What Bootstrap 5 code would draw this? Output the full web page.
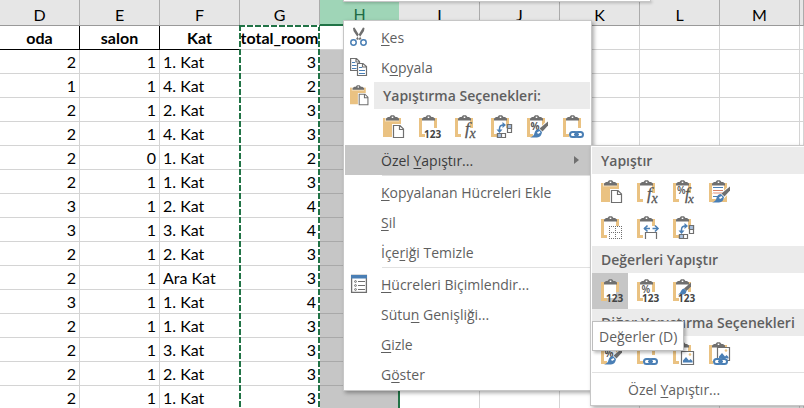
<!DOCTYPE html>
<html lang="tr">
<head>
<meta charset="utf-8">
<meta name="viewport" content="width=device-width, initial-scale=1">
<title>Özel Yapıştır</title>
<link href="https://cdn.jsdelivr.net/npm/bootstrap@5.3.0/dist/css/bootstrap.min.css" rel="stylesheet">
<style>
  body { font-family: "Open Sans", "Noto Sans", sans-serif; background: #fff; color: #000; }
  .workbook { min-height: 100vh; height: 100vh; }

  /* sheet */
  .sheet { table-layout: fixed; border-collapse: separate; border-spacing: 0; font-family: Lato, sans-serif; font-size: 16px; line-height: 23px; }
  .sheet col { width: 80px; }
  .sheet col.rest { width: auto; }
  .sheet th, .sheet td { padding: 0 3px; height: 24px; border: 0 solid #d4d4d4; border-width: 0 1px 1px 0; white-space: nowrap; overflow: hidden; }
  .sheet .letters th { height: 26px; padding: 4px 0 0; line-height: 21px; font-weight: 400; text-align: center; background: #e6e6e6; border-color: #ababab; border-bottom-color: #999; }
  .sheet .letters .picked { background: #9fd5b7; color: #1e6b45; border-right-color: #e6e6e6; border-bottom: 2px solid #217346; line-height: 20px; }
  .sheet .titles td { text-align: center; font-weight: 700; }
  .sheet .titles .field { border-color: #000; }
  .sheet .shade { background: #c6c6c6; border-bottom-color: #a9a9a9; border-right: 2px solid #217346; }
  .sheet .titles .wide { padding: 0; }
  .marquee { left: 239px; top: 25px; width: 81px; bottom: 0; pointer-events: none;
    background:
      repeating-linear-gradient(90deg, #217346 0 6px, #fff 6px 8px) top / 100% 2px no-repeat,
      repeating-linear-gradient(#217346 0 6px, #fff 6px 8px) left / 2px 100% no-repeat,
      repeating-linear-gradient(#217346 0 6px, #fff 6px 8px) right / 2px 100% no-repeat; }

  /* menus */
  .toolbar-edge { left: 343px; top: 0; width: 308px; height: 2px; background: #fff; border: 1px solid #c6c6c6; border-top: 0; box-shadow: 1px 1px 3px #0004; }
  .popup { background: #fff; border: 1px solid #c6c6c6; box-shadow: 2px 2px 4px #0005; font-size: 14px; color: #5f5f5f; }
  .main-menu { left: 343px; top: 20px; width: 249px; padding: 1px; }
  .sub-menu { left: 590px; top: 145px; right: 0; border-right: 0; padding: 1px 0 1px 1px; }
  .entry { height: 30px; padding: 0 8px 0 5px; gap: 13px; border: 0; background: transparent; color: inherit; text-align: left; white-space: nowrap; }
  .entry.active-entry { background: #c6c6c6; color: #3b3b3b; }
  .entry u { text-underline-offset: 2px; }
  .entry svg, .gutter svg { width: 18px; height: 20px; flex: none; }
  .entry .blank { width: 18px; flex: none; }
  .sub-menu .entry { padding-left: 36px; }
  .caption { height: 27px; background: #ebebeb; font-weight: 600; white-space: nowrap; padding-left: 9px; color: #5f5f5f; }
  .gutter { width: 29px; padding-left: 5px; flex: none; }
  .gutter svg { width: 21px; height: 21px; }
  .rule { height: 2px; border-top: 1px solid #e1e1e1; }
  .main-menu .rule { margin-left: 37px; }
  .tile { width: 36px; height: 36px; padding: 0; border: 0; background: transparent; line-height: 1; }
  .tile.hot { background: #c6c6c6; }
  .tile svg { width: 24px; height: 24px; margin-left: 6px; }
  .main-menu .tiles { padding-left: 29px; }
  .hint { left: 592px; top: 321px; height: 30px; padding: 0 6px; background: #fff; border: 1px solid #bebebe; box-shadow: 2px 2px 3px #0004; font-size: 14px; color: #5f5f5f; white-space: nowrap; }
</style>
<script src="https://cdn.jsdelivr.net/npm/bootstrap@5.3.0/dist/js/bootstrap.bundle.min.js"></script>
</head>
<body>
<svg class="d-none" aria-hidden="true">
  <symbol id="clip" viewBox="0 0 24 24">
    <path fill="#6f6f6f" d="M3 5.500V3.500L5 2H6.500L8 .3H11L12.500 2H14L16 3.500V5.500Z"/><rect x="8.700" y="1.600" width="1.600" height="1.400" fill="#fff"/>
  </symbol>
  <symbol id="open" viewBox="0 0 24 24">
    <path fill="#eac282" d="M0 3H3V19H6V22H0ZM15 3H18V13H15Z"/><path fill="#fff" d="M3 5H15V19H3Z"/><use href="#clip"/>
  </symbol>
  <symbol id="paste" viewBox="0 0 24 24">
    <path fill="#eac282" d="M0 3H18V22H0Z"/><path fill="#fff" d="M2 2H16V6.500H2Z" opacity=".5"/><use href="#clip"/>
    <path fill="#fff" stroke="#fff" stroke-width="3" d="M10.500 10.500H17L20.500 14V22.500H10.500Z"/>
    <path fill="#fff" stroke="#6f6f6f" stroke-width="1.200" d="M10.500 10.500H17L20.500 14V22.500H10.500ZM16.500 10.500V14.500H20.500"/>
  </symbol>
  <symbol id="digits" viewBox="0 0 24 24"><text x="5" y="23" font-family="Open Sans" font-weight="700" font-size="10" fill="#444">123</text></symbol>
  <symbol id="values" viewBox="0 0 24 24"><use href="#open"/><use href="#digits"/></symbol>
  <symbol id="formula" viewBox="0 0 24 24"><use href="#open"/><text x="10" y="19" font-family="Liberation Serif" font-style="italic" font-size="17" fill="#555" stroke="#555" stroke-width=".3">f</text><text x="14.500" y="22.500" font-family="Liberation Serif" font-style="italic" font-size="14" fill="#555" stroke="#555" stroke-width=".3">x</text></symbol>
  <symbol id="numformula" viewBox="0 0 24 24"><use href="#open"/><text x="4" y="13.500" font-family="Open Sans" font-weight="600" font-size="10" fill="#555">%</text><path fill="#fff" d="M13 13h6v3h-6z"/><text x="12" y="19" font-family="Liberation Serif" font-style="italic" font-size="16" fill="#555" stroke="#555" stroke-width=".3">f</text><text x="15" y="22.500" font-family="Liberation Serif" font-style="italic" font-size="13" fill="#555" stroke="#555" stroke-width=".3">x</text></symbol>
  <symbol id="brush" viewBox="0 0 24 24">
    <path stroke="#fff" stroke-width="5" d="M21 8L12 18"/><path fill="#6f6f6f" d="M21 6.500V10.500L15.500 16.500L12.500 13.500Z"/>
    <path fill="#4a7fb5" d="M12 14L15 17Q14.500 22 10 22.500H3Q7 21 7.500 18Q8.500 14 12 14Z"/><path fill="#fff" d="M10 17.500l2.500-1.500 1 1.500-2.500 1.500z"/>
  </symbol>
  <symbol id="format" viewBox="0 0 24 24"><use href="#open"/><text x="3.500" y="14.500" font-family="Open Sans" font-weight="700" font-size="10" fill="#555">%</text><use href="#brush"/></symbol>
  <symbol id="source" viewBox="0 0 24 24"><use href="#open"/><path fill="#eac282" d="M6 19h9v3H6zM15 12h3v10h-3z"/><path stroke="#4a7fb5" d="M4 7.500H14M4 16.500H12"/><path stroke="#d0613f" stroke-width=".8" fill="none" d="M4 11l1-1 1 1 1-1 1 1 1-1 1 1 1-1 1 1 1-1 1 1M4 13.500l1-1 1 1 1-1 1 1 1-1 1 1 1-1 1 1 1-1 1 1"/><use href="#brush"/></symbol>
  <symbol id="swap" viewBox="0 0 24 24"><use href="#open"/><path fill="none" stroke="#4a7fb5" stroke-width="1.500" d="M8.500 16V13.500Q8.500 10 12.500 10"/><path fill="#4a7fb5" d="M5.500 14.500H11.500L8.500 18ZM11.500 7V13L15 10Z"/><path fill="#fff" stroke="#6f6f6f" stroke-width="1.200" d="M16.500 9.500H20.500V17.500H16.500ZM6.500 18.500H14.500V22.500H6.500Z"/><path fill="#a9c1e0" stroke="#6f6f6f" stroke-width="1.200" d="M16.500 9.500H20.500V13.500H16.500ZM6.500 18.500H10.500V22.500H6.500Z"/></symbol>
  <symbol id="chain" viewBox="0 0 24 24"><g fill="#fff" stroke="#4a7fb5" stroke-width="2"><rect x="7" y="17" width="7.500" height="5" rx="2.500"/><rect x="12.500" y="17" width="7.500" height="5" rx="2.500" fill="none"/></g><path stroke="#4a7fb5" stroke-width="1.500" d="M11 19.500H16"/></symbol>
  <symbol id="link" viewBox="0 0 24 24"><use href="#open"/><path fill="#fff" d="M5 15h14v4H5z"/><use href="#chain"/></symbol>
  <symbol id="borders" viewBox="0 0 24 24"><use href="#open"/><path fill="#fff" d="M7 10h14v13H7z"/><path fill="none" stroke="#6f6f6f" stroke-dasharray="1 1" d="M8 10.500H21M8 16.500H21M8 22.500H21M8.500 10V23M14.500 10V23M20.500 10V23"/></symbol>
  <symbol id="colwidth" viewBox="0 0 24 24"><use href="#open"/><path fill="#fff" d="M7 10h14v7H7z"/><path stroke="#4a7fb5" stroke-width="1.300" d="M7 12.500H13M15.500 12.500H21"/><path fill="none" stroke="#4a7fb5" stroke-width="1.600" d="M10.500 9.500L7.500 12.500L10.500 15.500M18 9.500L21 12.500L18 15.500"/><path fill="#fff" stroke="#6f6f6f" stroke-width="1.200" d="M8.500 23V16.500H19.500V23"/></symbol>
  <symbol id="numvalues" viewBox="0 0 24 24"><use href="#open"/><text x="4.500" y="14" font-family="Open Sans" font-weight="600" font-size="10" fill="#555">%</text><use href="#digits"/></symbol>
  <symbol id="fmtvalues" viewBox="0 0 24 24"><use href="#open"/><path fill="#6f6f6f" d="M18 3.500V7.500L13.500 12L11 9.500Z"/><path fill="#4a7fb5" d="M11 9.500L13.500 12Q13 15.500 10 15.500H5Q7.500 14 8 12Q9 9.500 11 9.500Z"/><use href="#digits"/></symbol>
  <symbol id="photo" viewBox="0 0 24 24"><path fill="#fff" stroke="#6f6f6f" stroke-width="1.200" d="M8.500 9.500H20.500V22.500H8.500Z"/><circle cx="17" cy="12.500" r="1.300" fill="#eac282"/><path fill="#4a7fb5" d="M10 20.500V18.500L13 15L16 18.500L17.500 17L19.500 19V20.500Z"/></symbol>
  <symbol id="picture" viewBox="0 0 24 24"><use href="#open"/><use href="#photo"/></symbol>
  <symbol id="linkpic" viewBox="0 0 24 24"><use href="#open"/><g transform="translate(0 -4)"><use href="#photo"/></g><path fill="#fff" d="M4 16h14v7H4z"/><g transform="translate(-2 0)"><use href="#chain"/></g></symbol>
  <symbol id="cut" viewBox="0 0 18 20"><path fill="#6f6f6f" d="M3 1L4.500 .5L11.500 12L9.500 13L3.500 4ZM14.500 1L13 .5L6 12L8 13L14 4Z"/><g fill="#fff" stroke="#4a7fb5" stroke-width="1.500"><circle cx="3.500" cy="15.500" r="2.700"/><circle cx="13.500" cy="15.500" r="2.700"/></g></symbol>
  <symbol id="copy" viewBox="0 0 18 20"><g fill="#fff" stroke="#6f6f6f" stroke-width="1.200"><path d="M.6 1.500H6.500L9.500 4.500V13.500H.6ZM6 1.500V5H9.500"/><path d="M7.500 6.500H13L16.500 9.500V18.500H7.500ZM12.500 6.500V10H16.500"/></g><path stroke="#4a7fb5" d="M2 5.500H5M2 8.500H6.500M2 11.500H6.500M9 10.500H12M9 13.500H15M9 16.500H15"/></symbol>
  <symbol id="cells" viewBox="0 0 18 20"><path fill="#fff" stroke="#6f6f6f" stroke-width="1.300" d="M1.600 1.500H16.400V18.400H1.600Z"/><path fill="#4a7fb5" d="M1 1H17V4.500H1Z"/><g fill="none" stroke="#6f6f6f"><circle cx="5.500" cy="7.500" r=".9"/><circle cx="5.500" cy="11.500" r=".9"/><circle cx="5.500" cy="15.500" r=".9"/><path d="M8 7.500H15M8 11.500H15M8 15.500H15"/></g></symbol>
</svg>

<main class="workbook position-relative overflow-hidden">
  <table class="sheet w-100">
    <colgroup><col><col><col><col><col><col><col><col><col><col><col class="rest"></colgroup>
    <thead><tr class="letters"><th>D</th><th>E</th><th>F</th><th>G</th><th class="picked">H</th><th>I</th><th>J</th><th>K</th><th>L</th><th>M</th><th></th></tr></thead>
    <tbody id="rows">
      <tr class="titles"><td class="field">oda</td><td class="field">salon</td><td class="field">Kat</td><td class="wide"><div class="d-flex justify-content-center">total_room</div></td><td></td><td></td><td></td><td></td><td></td><td></td><td></td></tr>
    </tbody>
  </table>
  <div class="marquee position-absolute"></div>

  <div class="toolbar-edge position-absolute"></div>

  <div class="popup main-menu position-absolute d-flex flex-column" role="menu">
    <button class="entry d-flex align-items-center" role="menuitem"><svg><use href="#cut"/></svg><span><u>K</u>es</span></button>
    <button class="entry d-flex align-items-center" role="menuitem"><svg><use href="#copy"/></svg><span>K<u>o</u>pyala</span></button>
    <div class="d-flex align-items-center"><div class="gutter d-flex"><svg><use href="#paste"/></svg></div><div class="caption flex-grow-1 d-flex align-items-center">Yapıştırma Seçenekleri:</div></div>
    <div class="tiles d-flex">
      <button class="tile" aria-label="Yapıştır"><svg><use href="#paste"/></svg></button>
      <button class="tile" aria-label="Değerler"><svg><use href="#values"/></svg></button>
      <button class="tile" aria-label="Formüller"><svg><use href="#formula"/></svg></button>
      <button class="tile" aria-label="Devrik"><svg><use href="#swap"/></svg></button>
      <button class="tile" aria-label="Biçimlendirme"><svg><use href="#format"/></svg></button>
      <button class="tile" aria-label="Bağlantı Yapıştır"><svg><use href="#link"/></svg></button>
    </div>
    <button class="entry active-entry d-flex align-items-center" role="menuitem" aria-haspopup="true"><span class="blank"></span><span class="flex-grow-1">Özel <u>Y</u>apıştır...</span><svg viewBox="0 0 18 20"><path fill="#6f6f6f" d="M10 6L15 10L10 14Z"/></svg></button>
    <div class="rule"></div>
    <button class="entry d-flex align-items-center" role="menuitem"><span class="blank"></span><span><u>K</u>opyalanan Hücreleri Ekle</span></button>
    <button class="entry d-flex align-items-center" role="menuitem"><span class="blank"></span><span><u>S</u>il</span></button>
    <button class="entry d-flex align-items-center" role="menuitem"><span class="blank"></span><span>İçe<u>r</u>iği Temizle</span></button>
    <div class="rule"></div>
    <button class="entry d-flex align-items-center" role="menuitem"><svg><use href="#cells"/></svg><span><u>H</u>ücreleri Biçimlendir...</span></button>
    <button class="entry d-flex align-items-center" role="menuitem"><span class="blank"></span><span>Sütu<u>n</u> Genişliği...</span></button>
    <button class="entry d-flex align-items-center" role="menuitem"><span class="blank"></span><span><u>G</u>izle</span></button>
    <button class="entry d-flex align-items-center" role="menuitem"><span class="blank"></span><span>G<u>ö</u>ster</span></button>
  </div>

  <div class="popup sub-menu position-absolute d-flex flex-column" role="menu">
    <div class="caption d-flex align-items-center">Yapıştır</div>
    <div class="d-flex">
      <button class="tile" aria-label="Yapıştır"><svg><use href="#paste"/></svg></button>
      <button class="tile" aria-label="Formüller"><svg><use href="#formula"/></svg></button>
      <button class="tile" aria-label="Formüller ve Sayı Biçimi"><svg><use href="#numformula"/></svg></button>
      <button class="tile" aria-label="Kaynak Biçimini Koru"><svg><use href="#source"/></svg></button>
    </div>
    <div class="d-flex">
      <button class="tile" aria-label="Kenarlık Yok"><svg><use href="#borders"/></svg></button>
      <button class="tile" aria-label="Sütun Genişliği"><svg><use href="#colwidth"/></svg></button>
      <button class="tile" aria-label="Devrik"><svg><use href="#swap"/></svg></button>
    </div>
    <div class="caption d-flex align-items-center">Değerleri Yapıştır</div>
    <div class="d-flex">
      <button class="tile hot" aria-label="Değerler"><svg><use href="#values"/></svg></button>
      <button class="tile" aria-label="Değerler ve Sayı Biçimi"><svg><use href="#numvalues"/></svg></button>
      <button class="tile" aria-label="Değerler ve Kaynak Biçimi"><svg><use href="#fmtvalues"/></svg></button>
    </div>
    <div class="caption d-flex align-items-center">Diğer Yapıştırma Seçenekleri</div>
    <div class="d-flex">
      <button class="tile" aria-label="Biçimlendirme"><svg><use href="#format"/></svg></button>
      <button class="tile" aria-label="Bağlantı"><svg><use href="#link"/></svg></button>
      <button class="tile" aria-label="Resim"><svg><use href="#picture"/></svg></button>
      <button class="tile" aria-label="Bağlantılı Resim"><svg><use href="#linkpic"/></svg></button>
    </div>
    <div class="rule"></div>
    <button class="entry d-flex align-items-center" role="menuitem"><span>Özel <u>Y</u>apıştır...</span></button>
  </div>

  <div class="hint position-absolute d-flex align-items-center" role="tooltip">Değerler (D)</div>
</main>

<script>
  const data = [
    [2, 1, '1. Kat', 3], [1, 1, '4. Kat', 2], [2, 1, '2. Kat', 3], [2, 1, '4. Kat', 3], [2, 0, '1. Kat', 2],
    [2, 1, '1. Kat', 3], [3, 1, '2. Kat', 4], [3, 1, '3. Kat', 4], [2, 1, '2. Kat', 3], [2, 1, 'Ara Kat', 3],
    [3, 1, '1. Kat', 4], [2, 1, '1. Kat', 3], [2, 1, '3. Kat', 3], [2, 1, '2. Kat', 3], [2, 1, '1. Kat', 3]
  ];
  document.getElementById('rows').insertAdjacentHTML('beforeend', data.map(r =>
    `<tr><td class="text-end">${r[0]}</td><td class="text-end">${r[1]}</td><td>${r[2]}</td><td class="text-end">${r[3]}</td><td class="shade"></td>${'<td></td>'.repeat(6)}</tr>`).join(''));
</script>
</body>
</html>
